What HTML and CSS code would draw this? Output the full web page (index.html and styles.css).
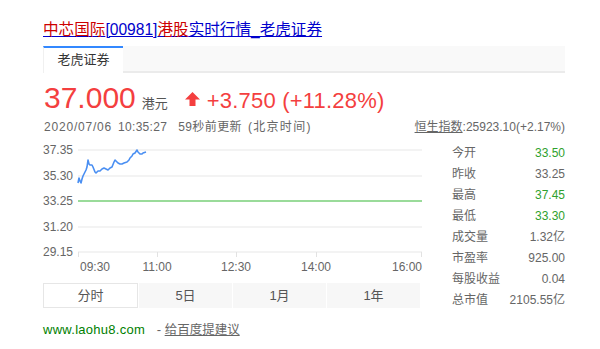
FILE: index.html
```html
<!DOCTYPE html>
<html lang="zh-CN">
<head>
<meta charset="utf-8">
<title>中芯国际[00981]港股实时行情_老虎证券</title>
<link rel="stylesheet" href="styles.css">
</head>
<body>
<div class="card">
  <h3 class="title"><a href="#"><em>中芯国际</em>[00981]<em>港股</em>实时行情_老虎证券</a></h3>
  <div class="source-tabs">
    <div class="source-tab active">老虎证券</div>
  </div>
  <div class="price-row">
    <span class="price">37.000</span>
    <span class="currency">港元</span>
    <svg class="arrow" width="15" height="14" viewBox="0 0 15 14"><path d="M7.5 0 L15 7.5 L10.5 7.5 L10.5 14 L4.5 14 L4.5 7.5 L0 7.5 Z" fill="#f43f3f"/></svg>
    <span class="change">+3.750 (+11.28%)</span>
  </div>
  <div class="meta-row">
    <span class="date">2020/07/06</span>
    <span class="clock">10:35:27</span>
    <span class="updated">59秒前更新</span>
    <span class="zone">(北京时间)</span>
    <span class="index"><u>恒生指数</u>:25923.10(+2.17%)</span>
  </div>
  <div class="main">
    <div class="left">
      <svg class="chart" width="380" height="136" viewBox="0 0 380 136">
        <g stroke="#efefef" stroke-width="1.5">
          <line x1="35" y1="10" x2="379" y2="10"/>
          <line x1="35" y1="36" x2="379" y2="36"/>
          <line x1="35" y1="87" x2="379" y2="87"/>
          <line x1="35" y1="112" x2="379" y2="112"/>
        </g>
        <line x1="35" y1="61" x2="379" y2="61" stroke="#78cf78" stroke-width="1.5"/>
        <g stroke="#e2e2e2" stroke-width="1">
          <line x1="35.5" y1="112" x2="35.5" y2="117"/>
          <line x1="114.5" y1="112" x2="114.5" y2="117"/>
          <line x1="193.5" y1="112" x2="193.5" y2="117"/>
          <line x1="273.5" y1="112" x2="273.5" y2="117"/>
          <line x1="378.5" y1="112" x2="378.5" y2="117"/>
        </g>
        <polyline fill="none" stroke="#4a8ff2" stroke-width="1.6" stroke-linejoin="round"
          points="35,43 36,38 37,41 38,43 39,39 40,36 42,32 43,30 44,27 45,20 46,24 47,25 49,25 50,27 52,32 53,33 55,31 57,31 59,29 61,28 63,29 65,30 67,28 69,27 71,22 72,20 74,22 75,23 77,24 79,24 81,23 84,22 86,20 87,18 89,16 90,14 92,13 94,10 95,12 97,14 99,14 100,13 103,12"/>
        <g class="ylab">
          <text x="0" y="14">37.35</text>
          <text x="0" y="40">35.30</text>
          <text x="0" y="65">33.25</text>
          <text x="0" y="91">31.20</text>
          <text x="0" y="116">29.15</text>
        </g>
        <g class="xlab">
          <text x="37" y="131">09:30</text>
          <text x="114" y="131" text-anchor="middle">11:00</text>
          <text x="193" y="131" text-anchor="middle">12:30</text>
          <text x="273" y="131" text-anchor="middle">14:00</text>
          <text x="379" y="131" text-anchor="end">16:00</text>
        </g>
      </svg>
      <div class="range-tabs">
        <div class="range-tab active">分时</div>
        <div class="range-tab">5日</div>
        <div class="range-tab">1月</div>
        <div class="range-tab">1年</div>
      </div>
    </div>
    <dl class="stats">
      <div class="stat"><dt>今开</dt><dd class="up">33.50</dd></div>
      <div class="stat"><dt>昨收</dt><dd>33.25</dd></div>
      <div class="stat"><dt>最高</dt><dd class="up">37.45</dd></div>
      <div class="stat"><dt>最低</dt><dd class="up">33.30</dd></div>
      <div class="stat"><dt>成交量</dt><dd>1.32亿</dd></div>
      <div class="stat"><dt>市盈率</dt><dd>925.00</dd></div>
      <div class="stat"><dt>每股收益</dt><dd>0.04</dd></div>
      <div class="stat"><dt>总市值</dt><dd>2105.55亿</dd></div>
    </dl>
  </div>
  <div class="footer">
    <span class="site">www.laohu8.com</span>
    <span class="dash">-</span>
    <a class="feedback" href="#">给百度提建议</a>
  </div>
</div>
</body>
</html>
```

FILE: styles.css
```css
html, body {
  margin: 0;
  padding: 0;
  background: #fff;
}

body {
  font-family: "Liberation Sans", "Noto Sans CJK SC", sans-serif;
  color: #666;
}

.card {
  width: 522px;
  margin-left: 43px;
}

.title {
  margin: 0;
  padding-top: 20px;
  height: 20px;
  line-height: 20px;
  font-size: 15.6px;
  font-weight: normal;
  white-space: nowrap;
}

.title a {
  color: #0000cc;
  text-decoration: underline;
}

.title em {
  font-style: normal;
  color: #cc0000;
}

.source-tabs {
  margin-top: 6px;
  height: 25px;
  display: flex;
  background: #f9f9f9;
  border-bottom: 2px solid #ebebeb;
}

.source-tab {
  width: 80px;
  box-sizing: border-box;
  height: 27px;
  border-top: 2px solid #3388ff;
  border-left: 1px solid #f0f0f0;
  background: #fff;
  text-align: center;
  line-height: 24px;
  font-size: 13px;
  color: #333;
}

.price-row {
  margin-top: 7px;
  height: 36px;
  display: flex;
  align-items: baseline;
  white-space: nowrap;
  color: #f43f3f;
}

.price {
  font-size: 30px;
  line-height: 36px;
  margin-left: 1px;
}

.currency {
  font-size: 13px;
  color: #555;
  margin-left: 6px;
}

.arrow {
  margin-left: 17px;
  align-self: center;
  position: relative;
  top: 1px;
}

.change {
  font-size: 22px;
  letter-spacing: 0.2px;
  margin-left: 7px;
}

.meta-row {
  margin-top: 2px;
  height: 18px;
  line-height: 18px;
  font-size: 12px;
  display: flex;
  white-space: nowrap;
  color: #666;
}

.date {
  margin-left: 1px;
  letter-spacing: 0.8px;
}

.clock {
  margin-left: 6px;
  letter-spacing: 0.3px;
}

.updated {
  margin-left: 11px;
  letter-spacing: 0.4px;
}

.zone {
  margin-left: 6px;
  letter-spacing: 1.3px;
}

.index {
  margin-left: auto;
}

.index u {
  text-decoration: underline;
}

.main {
  margin-top: 4px;
  display: grid;
  grid-template-columns: 380px 113px;
  column-gap: 29px;
}

.chart {
  display: block;
}

.ylab text, .xlab text {
  font-family: "Liberation Sans", sans-serif;
  font-size: 12px;
  fill: #666;
}

.range-tabs {
  margin-top: 7px;
  width: 377px;
  height: 25px;
  display: flex;
  background: #f7f7f7;
}

.range-tab {
  flex: 1;
  box-sizing: border-box;
  text-align: center;
  line-height: 25px;
  font-size: 13px;
  color: #555;
  border-left: 1px solid #fff;
}

.range-tab.active {
  background: #fff;
  border: 1px solid #e6e6e6;
  line-height: 23px;
}

.stats {
  margin: 0;
  padding-top: 3px;
}

.stat {
  display: flex;
  justify-content: space-between;
  height: 21px;
  line-height: 21px;
  font-size: 12px;
}

.stat dt {
  color: #666;
}

.stat dd {
  margin: 0;
  color: #666;
}

.stat dd.up {
  color: #2ea12e;
}

.footer {
  margin-top: 10px;
  height: 18px;
  line-height: 18px;
  font-size: 13px;
  white-space: nowrap;
}

.site {
  color: #008000;
  letter-spacing: 0.27px;
}

.dash {
  color: #666;
  margin-left: 8px;
}

.feedback {
  color: #666;
  font-size: 12.5px;
  text-decoration: underline;
}
```
